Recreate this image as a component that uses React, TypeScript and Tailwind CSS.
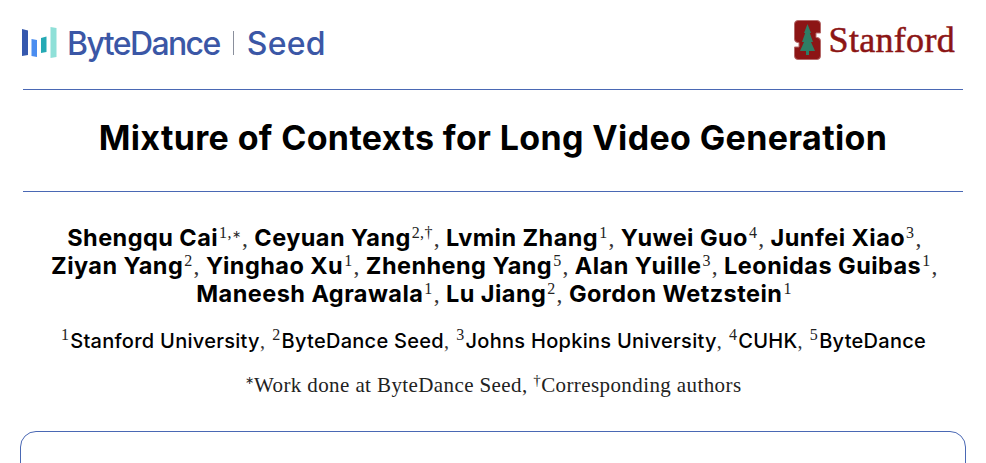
const serif = "font-['Liberation_Serif',serif]";

function Sup({ children }: { children: React.ReactNode }) {
  return <span className={`${serif} font-normal text-[16px] leading-[0] align-[8px] text-[#222] tracking-[0.3px] mx-[1px]`}>{children}</span>;
}

function Comma({ end }: { end?: boolean }) {
  return <span className={end ? `${serif} font-normal text-[#333]` : `${serif} font-normal text-[#333] mr-[6px]`}>,</span>;
}

function Author({ name, sup, last, end }: { name: string; sup: React.ReactNode; last?: boolean; end?: boolean }) {
  return (
    <>
      <span>{name}</span>
      <Sup>{sup}</Sup>
      {!last && <Comma end={end} />}
    </>
  );
}

function Rule() {
  return <div className="w-[940px] h-px shrink-0 bg-[#4a68b4]" />;
}

function ByteDanceLogo() {
  return (
    <div className="flex items-center h-[36px] text-[#3b57a6]">
      <svg width="36" height="32" viewBox="0 0 36 32" className="mr-[9px]">
        <path d="M0 2 L6 3.5 V28 L0 29 Z" fill="#3558ae" />
        <path d="M9.5 12 L15 13 V30 L9.5 29 Z" fill="#4a8df0" />
        <path d="M19 11 L24.5 9.5 V25 L19 26 Z" fill="#25a9b4" />
        <path d="M28.5 0 L34.5 1 V30 L28.5 31 Z" fill="#8fe0d8" />
      </svg>
      <span className="font-['Inter',sans-serif] text-[32px] font-medium tracking-[-1.6px] leading-none mt-[1px]">ByteDance</span>
      <span className="w-px h-[24px] bg-[#8a8f9c] mx-[13px]" />
      <span className="font-['Inter',sans-serif] text-[32px] font-medium tracking-[0.3px] leading-none mt-[1px]">Seed</span>
    </div>
  );
}

function StanfordLogo() {
  return (
    <div className="flex items-center">
      <svg width="27" height="40" viewBox="0 0 27 40" className="mr-[8px]">
        <path
          d="M4 0.5 H23 Q26.5 0.5 26.5 4 V13 H22 V17.5 H23 Q26.5 17.5 26.5 21 V36 Q26.5 39.5 23 39.5 H4 Q0.5 39.5 0.5 36 V27 H5 V22.5 H4 Q0.5 22.5 0.5 19 V4 Q0.5 0.5 4 0.5 Z"
          fill="#8c1515"
          stroke="#b56a6a"
          strokeWidth="1"
        />
        <path d="M13.5 4 L17 13 L15.8 13 L19 22 L17 22 L21 31 L15 31 V35 H12 V31 L6 31 L10 22 L8 22 L11.2 13 L10 13 Z" fill="#2f7d64" />
      </svg>
      <span className={`${serif} text-[36px] leading-none text-[#8c1515] tracking-[0.3px] [-webkit-text-stroke:0.5px_#8c1515]`}>Stanford</span>
    </div>
  );
}

export default function App() {
  return (
    <div className="w-[986px] h-[463px] overflow-hidden bg-white flex flex-col items-center text-black">
      <div className="w-[940px] h-[89px] shrink-0 flex items-start justify-between">
        <div className="mt-[25px] -ml-[1px]"><ByteDanceLogo /></div>
        <div className="mt-[20px] mr-[8px]"><StanfordLogo /></div>
      </div>
      <Rule />
      <div className="w-[940px] h-[101px] shrink-0 flex items-center justify-center pb-[6px]">
        <h1 className="font-['Inter',sans-serif] text-[34px] font-bold leading-none tracking-[0.36px] whitespace-nowrap">
          Mixture of Contexts for Long Video Generation
        </h1>
      </div>
      <Rule />
      <div className="mt-[32px] pl-[3px] shrink-0 font-['Inter',sans-serif] font-bold text-[23.5px] text-center whitespace-nowrap tracking-[0.45px]">
        <div className="h-[28px] leading-[28px]">
          <Author name="Shengqu Cai" sup={<>1,<span className="text-[11px]">∗</span></>} />
          <Author name="Ceyuan Yang" sup="2,†" />
          <Author name="Lvmin Zhang" sup="1" />
          <Author name="Yuwei Guo" sup="4" />
          <Author name="Junfei Xiao" sup="3" end />
        </div>
        <div className="h-[28px] leading-[28px]">
          <Author name="Ziyan Yang" sup="2" />
          <Author name="Yinghao Xu" sup="1" />
          <Author name="Zhenheng Yang" sup="5" />
          <Author name="Alan Yuille" sup="3" />
          <Author name="Leonidas Guibas" sup="1" end />
        </div>
        <div className="h-[28px] leading-[28px]">
          <Author name="Maneesh Agrawala" sup="1" />
          <Author name="Lu Jiang" sup="2" />
          <Author name="Gordon Wetzstein" sup="1" last />
        </div>
      </div>
      <div className="mt-[19px] h-[28px] shrink-0 font-['Inter',sans-serif] font-medium text-[20px] leading-[28px] whitespace-nowrap tracking-[0.28px]">
        <Sup>1</Sup>Stanford University<Comma /><Sup>2</Sup>ByteDance Seed<Comma /><Sup>3</Sup>Johns Hopkins University<Comma /><Sup>4</Sup>CUHK<Comma /><Sup>5</Sup>ByteDance
      </div>
      <div className={`mt-[16px] h-[28px] shrink-0 ${serif} text-[21px] leading-[28px] tracking-[0.4px] whitespace-nowrap text-[#222]`}>
        <span className="text-[11px] leading-[0] align-[8px]">∗</span>Work done at ByteDance Seed, <span className="text-[15px] leading-[0] align-[7px]">†</span>Corresponding authors
      </div>
      <div className="mt-[32px] w-[946px] h-[60px] shrink-0 rounded-[16px] border border-[#4a68b4]" />
    </div>
  );
}
